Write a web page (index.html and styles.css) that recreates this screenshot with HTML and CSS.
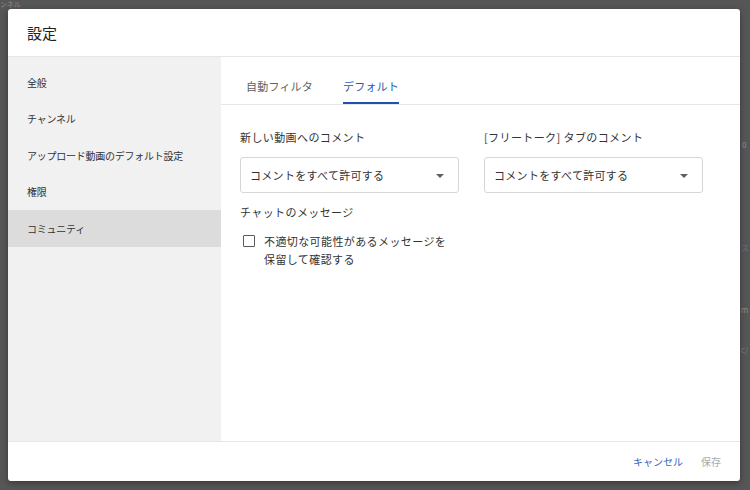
FILE: index.html
```html
<!DOCTYPE html>
<html lang="ja">
<head>
<meta charset="utf-8">
<title>設定</title>
<link rel="stylesheet" href="styles.css">
</head>
<body>
<div class="backdrop" aria-hidden="true">
  <span class="bg-text bg-t1">ンネル</span>
  <span class="bg-text bg-t2">0</span>
  <span class="bg-text bg-t3">ス</span>
  <span class="bg-text bg-t4">m</span>
  <span class="bg-text bg-t5">c/</span>
</div>
<div class="dialog">
  <header class="dialog-header">設定</header>
  <div class="dialog-body">
    <nav class="sidebar">
      <div class="nav-item">全般</div>
      <div class="nav-item">チャンネル</div>
      <div class="nav-item">アップロード動画のデフォルト設定</div>
      <div class="nav-item">権限</div>
      <div class="nav-item active">コミュニティ</div>
    </nav>
    <section class="panel">
      <div class="tabs">
        <div class="tab">自動フィルタ</div>
        <div class="tab active">デフォルト</div>
      </div>
      <div class="form">
        <div class="col">
          <div class="label">新しい動画へのコメント</div>
          <div class="select">
            <span>コメントをすべて許可する</span>
            <span class="caret"></span>
          </div>
          <div class="label chat-label">チャットのメッセージ</div>
          <label class="check-row">
            <span class="checkbox"></span>
            <span class="check-text">不適切な可能性があるメッセージを保留して確認する</span>
          </label>
        </div>
        <div class="col">
          <div class="label">[フリートーク] タブのコメント</div>
          <div class="select">
            <span>コメントをすべて許可する</span>
            <span class="caret"></span>
          </div>
        </div>
      </div>
    </section>
  </div>
  <footer class="dialog-footer">
    <span class="btn btn-cancel">キャンセル</span>
    <span class="btn btn-save">保存</span>
  </footer>
</div>
</body>
</html>
```
FILE: styles.css
```css
* { box-sizing: border-box; }
html, body { height: 100%; }
body {
  margin: 0;
  padding: 9px 10px 9px 8px;
  background: #565656;
  font-family: "Noto Sans CJK JP", "Noto Sans", sans-serif;
  color: #333;
  overflow: hidden;
  position: relative;
}
.backdrop { position: absolute; inset: 0; }
.bg-text { position: absolute; color: #7a7a7a; font-size: 8px; line-height: 9px; }
.bg-t1 { left: 0; top: 0; font-size: 7px; line-height: 8px; color: #8a8a8a; }
.bg-t2 { left: 742px; top: 140px; color: #909090; }
.bg-t3 { left: 741px; top: 243px; color: #6c6c80; }
.bg-t4 { left: 741px; top: 305px; color: #8a8a8a; }
.bg-t5 { left: 741px; top: 345px; color: #7a7a7a; }

.dialog {
  position: relative;
  width: 732px;
  height: 472px;
  background: #fff;
  border-radius: 3px;
  box-shadow: 0 2px 6px rgba(0,0,0,0.35);
  display: flex;
  flex-direction: column;
  overflow: hidden;
}
.dialog-header {
  height: 48px;
  flex: none;
  padding-left: 19px;
  display: flex;
  align-items: center;
  font-size: 15px;
  color: #222;
  border-bottom: 1px solid #e6e6e6;
  padding-bottom: 1px;
}
.dialog-body {
  flex: 1;
  display: flex;
  min-height: 0;
}
.sidebar {
  width: 213px;
  flex: none;
  background: #f1f1f1;
  padding-top: 7px;
}
.nav-item {
  height: 36.5px;
  display: flex;
  align-items: center;
  padding-left: 19px;
  font-size: 10px;
  letter-spacing: -0.25px;
  color: #333;
}
.nav-item.active { background: #dcdcdc; }

.panel { flex: 1; display: flex; flex-direction: column; }
.tabs {
  height: 48px;
  flex: none;
  display: flex;
  align-items: flex-end;
  gap: 30px;
  padding-left: 25px;
  border-bottom: 1px solid #e6e6e6;
}
.tab {
  font-size: 11px;
  line-height: 16px;
  letter-spacing: 0.2px;
  padding-bottom: 8px;
  border-bottom: 2px solid transparent;
  color: #606060;
}
.tab.active { color: #2a59b3; border-bottom-color: #2350a8; }

.form {
  display: grid;
  grid-template-columns: 219px 219px;
  column-gap: 25px;
  padding: 24px 0 0 19px;
  align-items: start;
}
.col { display: flex; flex-direction: column; }
.label {
  font-size: 11px;
  line-height: 16px;
  letter-spacing: 0.4px;
  color: #333;
}
.select {
  margin-top: 12px;
  height: 36px;
  border: 1px solid #d6d6d6;
  border-radius: 3px;
  display: flex;
  align-items: center;
  justify-content: space-between;
  padding: 0 14px 0 9px;
  font-size: 11px;
  letter-spacing: 0.3px;
  color: #333;
}
.caret {
  width: 0; height: 0;
  border-left: 4px solid transparent;
  border-right: 4px solid transparent;
  border-top: 4px solid #606060;
  margin-top: 1px;
}
.chat-label { margin-top: 11px; }
.check-row {
  margin-top: 12px;
  display: flex;
  align-items: flex-start;
}
.checkbox {
  flex: none;
  width: 12px;
  height: 12px;
  margin: 3px 0 0 3px;
  border: 1.5px solid #5a5a5a;
  border-radius: 1px;
}
.check-text {
  margin-left: 9px;
  max-width: 188px;
  font-size: 11px;
  line-height: 18px;
  letter-spacing: 0.4px;
  color: #333;
}

.dialog-footer {
  height: 40px;
  flex: none;
  border-top: 1px solid #e6e6e6;
  display: flex;
  align-items: center;
  justify-content: flex-end;
  gap: 18px;
  padding-right: 19px;
  font-size: 10px;
}
.btn-cancel { color: #3566bf; }
.btn-save { color: #a9a9a9; }
```
